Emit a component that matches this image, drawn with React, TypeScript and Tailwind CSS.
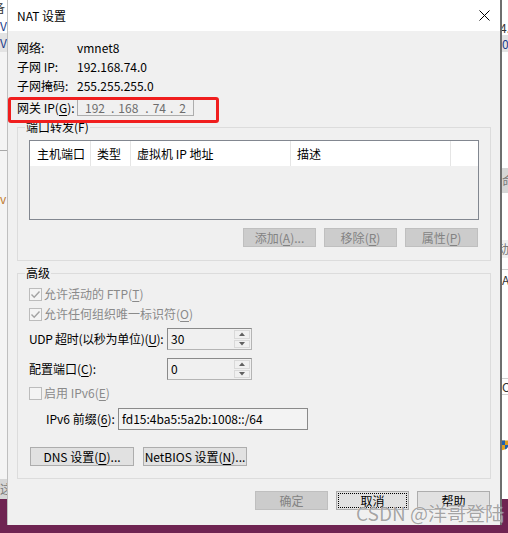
import React from 'react'

const purple = 'bg-[#6f2452]'

const Key = ({ k }: { k: string }) => (
  <span>
    (<u className="underline-offset-2">{k}</u>)
  </span>
)

type BtnProps = {
  children: React.ReactNode
  className?: string
  disabled?: boolean
  focus?: boolean
}

const Button = ({ children, className, disabled, focus }: BtnProps) => (
  <div
    className={
      'relative flex h-[19px] items-center justify-center whitespace-nowrap border leading-none ' +
      (disabled
        ? 'border-[#bfbfbf] bg-[#cccccc] text-[#838383] '
        : 'border-[#adadad] bg-[#e1e1e1] text-black ') +
      (className ?? '')
    }
  >
    {focus && <div className="absolute inset-[1px] border border-dotted border-black" />}
    {children}
  </div>
)

const Group = ({ label, children }: { label: string; children: React.ReactNode }) => (
  <div className="relative border border-[#dcdcdc]">
    <span className="absolute -top-[9px] left-[7px] bg-[#f0f0f0] px-[1px] leading-[16px]">{label}</span>
    {children}
  </div>
)

const Check = ({ checked }: { checked?: boolean }) => (
  <div className="flex h-[13px] w-[13px] shrink-0 items-center justify-center border border-[#bcbcbc] bg-[#f4f4f4]">
    {checked && (
      <svg width="11" height="11" viewBox="0 0 11 11">
        <path d="M1.5 5.5 L4.2 8.2 L9.5 2.5" fill="none" stroke="#a3a3a3" strokeWidth="1.4" />
      </svg>
    )}
  </div>
)

const Spin = ({ value }: { value: string }) => (
  <div className="flex h-[22px] w-[85px] shrink-0 border border-[#8a8a8a] border-r-[#b4b4b4] border-b-[#b4b4b4] bg-[#f0f0f0]">
    <span className="flex-1 pl-[3px] leading-[20px]">{value}</span>
    <div className="flex w-[17px] flex-col gap-[1px] py-[1px] pr-[1px]">
      <div className="flex flex-1 items-center justify-center border border-[#d9d9d9]">
        <svg width="6" height="4" viewBox="0 0 6 4">
          <polygon points="0,4 3,0.5 6,4" fill="#606060" />
        </svg>
      </div>
      <div className="flex flex-1 items-center justify-center border border-[#d9d9d9]">
        <svg width="6" height="4" viewBox="0 0 6 4">
          <polygon points="0,0 6,0 3,3.5" fill="#606060" />
        </svg>
      </div>
    </div>
  </div>
)

const InfoRow = ({ label, value }: { label: string; value: string }) => (
  <div className="flex h-[19px] items-center">
    <span className="w-[60px]">{label}</span>
    <span>{value}</span>
  </div>
)

const LeftStrip = () => (
  <div className="flex w-[7px] shrink-0 flex-col overflow-hidden whitespace-nowrap text-[12px] leading-none">
    <div className="h-[20px] bg-white pt-[2px]">
      <span className="-ml-[7px] text-[#333]">备</span>
    </div>
    <div className="h-[13px] bg-white text-[#1a3a8a]">V</div>
    <div className="flex h-[19px] items-center bg-[#e3e3e3] text-[#1a3a8a]">V</div>
    <div className="h-[98px] bg-[#f4f4f4]" />
    <div className="h-[1px] bg-[#a8a8a8]" />
    <div className="h-[42px] bg-[#f4f4f4]" />
    <div className="h-[14px] bg-[#f4f4f4] text-[#c07a30]">v</div>
    <div className="h-[272px] bg-[#f4f4f4]" />
    <div className="flex h-[20px] items-center bg-[#d6d6d6] text-[#7a7a7a]">这</div>
    <div className={'flex-1 ' + purple} />
  </div>
)

const RightStrip = () => (
  <div className="flex w-[6px] shrink-0 flex-col overflow-hidden whitespace-nowrap text-[12px] leading-none">
    <div className="h-[35px] bg-white pt-[22px] text-[#333]">
      <span className="-ml-[2px]">4.</span>
    </div>
    <div className="flex h-[17px] items-center bg-[#e3e3e3] text-[#1a3a8a]">0</div>
    <div className="h-[116px] bg-white" />
    <div className="flex h-[25px] items-center bg-[#d6d6d6] text-[#777]">命</div>
    <div className="h-[47px] bg-white" />
    <div className="flex h-[18px] items-center bg-[#f0f0f0] text-[#777]">
      <span className="-ml-[5px]">动</span>
    </div>
    <div className="h-[12px] border-b border-[#cfcfcf] bg-white" />
    <div className="flex h-[20px] items-center bg-white text-[#333]">AT</div>
    <div className="h-[88px] bg-white" />
    <div className="flex h-[17px] items-center border-y border-[#cfcfcf] bg-white text-[#333]">CR</div>
    <div className="h-[35px] bg-white" />
    <div className="flex h-[30px] items-center bg-white">
      <svg width="8" height="14" viewBox="0 0 8 14">
        <path d="M0 1 L8 1 L8 8 Q8 12 0 14 Z" fill="#e0a020" />
        <path d="M0 1 L4 1 L4 7 L0 7 Z" fill="#2060b0" />
        <path d="M4 7 L8 7 L8 9 Q7 12 4 13 Z" fill="#2060b0" />
      </svg>
    </div>
    <div className="h-[39px] bg-white" />
    <div className={'flex-1 ' + purple} />
  </div>
)

export default function App() {
  return (
    <div className="relative flex h-[533px] w-[508px] overflow-hidden bg-white font-['Noto_Sans_CJK_SC',sans-serif] text-[12px] text-black">
      <LeftStrip />
      <div className="flex w-[495px] shrink-0 flex-col">
        <div className="flex h-[525px] flex-col border-l border-r-2 border-l-[#bfbfbf] border-r-[#6e6e6e] bg-[#f0f0f0]">
          {/* title bar */}
          <div className="flex h-[31px] items-center justify-between bg-white pl-[9px] pr-[10px]">
            <span>NAT 设置</span>
            <svg width="11" height="11" viewBox="0 0 11 11">
              <path d="M0.5 0.5 L10.5 10.5 M10.5 0.5 L0.5 10.5" stroke="#000" strokeWidth="1" />
            </svg>
          </div>

          <div className="flex flex-col px-[9px]">
            <div className="mt-[7px]">
              <InfoRow label="网络:" value="vmnet8" />
              <InfoRow label="子网 IP:" value="192.168.74.0" />
              <InfoRow label="子网掩码:" value="255.255.255.0" />
            </div>

            <div className="mt-[4px] flex h-[17px] items-center">
              <span className="w-[60px] whitespace-nowrap">
                网关 IP<Key k="G" />:
              </span>
              <div className="flex h-[17px] w-[117px] items-center border border-[#adadad] pl-[7px] text-[#6d6d6d]">
                <span>192</span>
                <span className="ml-[6px]">.</span>
                <span className="ml-[4px]">168</span>
                <span className="ml-[7px]">.</span>
                <span className="ml-[4px]">74</span>
                <span className="ml-[4px]">.</span>
                <span className="ml-[6px]">2</span>
              </div>
            </div>

            {/* port forwarding */}
            <div className="mt-[11px]">
              <Group label="端口转发(F)">
                <div className="flex flex-col px-[11px] pb-[13px] pt-[12px]">
                  <div className="flex h-[80px] flex-col border border-[#828790] bg-[#f0f0f0]">
                    <div className="flex h-[25px] bg-white">
                      <div className="flex w-[61px] items-center border-r border-[#e5e5e5] pl-[7px]">主机端口</div>
                      <div className="flex w-[40px] items-center border-r border-[#e5e5e5] pl-[6px]">类型</div>
                      <div className="flex w-[160px] items-center border-r border-[#e5e5e5] pl-[6px]">虚拟机 IP 地址</div>
                      <div className="flex w-[160px] items-center border-r border-[#e5e5e5] pl-[6px]">描述</div>
                      <div className="flex-1" />
                    </div>
                  </div>
                  <div className="mt-[8px] flex justify-end gap-[8px] pr-[1px]">
                    <Button disabled className="w-[73px]">
                      添加<Key k="A" />...
                    </Button>
                    <Button disabled className="w-[73px]">
                      移除<Key k="R" />
                    </Button>
                    <Button disabled className="w-[73px]">
                      属性<Key k="P" />
                    </Button>
                  </div>
                </div>
              </Group>
            </div>

            {/* advanced */}
            <div className="mt-[12px]">
              <Group label="高级">
                <div className="flex flex-col pb-[12px] pl-[11px] pt-[10px]">
                  <div className="flex h-[20px] items-center gap-[2px] text-[#8a8a8a]">
                    <Check checked />
                    <span>
                      允许活动的 FTP<Key k="T" />
                    </span>
                  </div>
                  <div className="flex h-[20px] items-center gap-[2px] text-[#8a8a8a]">
                    <Check checked />
                    <span>
                      允许任何组织唯一标识符<Key k="O" />
                    </span>
                  </div>
                  <div className="mt-[4px] flex h-[22px] items-center">
                    <span className="w-[138px] shrink-0 whitespace-nowrap tracking-[-0.3px]">
                      UDP 超时(以秒为单位)<Key k="U" />:
                    </span>
                    <Spin value="30" />
                  </div>
                  <div className="mt-[8px] flex h-[22px] items-center">
                    <span className="w-[138px] shrink-0 whitespace-nowrap">
                      配置端口<Key k="C" />:
                    </span>
                    <Spin value="0" />
                  </div>
                  <div className="mt-[3px] flex h-[20px] items-center gap-[2px] text-[#8a8a8a]">
                    <Check />
                    <span>
                      启用 IPv6<Key k="E" />
                    </span>
                  </div>
                  <div className="mt-[5px] flex h-[22px] items-center pl-[17px]">
                    <span className="w-[72px] shrink-0 whitespace-nowrap">
                      IPv6 前缀<Key k="6" />:
                    </span>
                    <div className="flex h-[22px] w-[190px] items-center border border-[#8a8a8a] bg-[#f3f3f3] pl-[3px]">
                      fd15:4ba5:5a2b:1008::/64
                    </div>
                  </div>
                  <div className="mt-[17px] flex gap-[9px] pl-[1px]">
                    <Button className="w-[104px]">
                      DNS 设置<Key k="D" />...
                    </Button>
                    <Button className="w-[104px]">
                      NetBIOS 设置<Key k="N" />...
                    </Button>
                  </div>
                </div>
              </Group>
            </div>

            {/* dialog buttons */}
            <div className="mt-[12px] flex justify-end gap-[8px] pr-[1px]">
              <Button disabled className="w-[73px]">
                确定
              </Button>
              <Button focus className="w-[73px]">
                取消
              </Button>
              <Button className="w-[73px]">帮助</Button>
            </div>
          </div>
        </div>
        <div className={'flex-1 ' + purple} />
      </div>
      <RightStrip />

      {/* annotation + watermark overlays */}
      <div className="absolute left-[8px] top-[97px] h-[26px] w-[211px] rounded-[3px] border-[3px] border-[#f01e1e]" />
      <div className="absolute left-[356px] top-[501px] whitespace-nowrap text-[19px] leading-[24px] text-[rgba(125,125,125,0.7)] [text-shadow:0_0_1px_#fff]">
        CSDN @洋哥登陆
      </div>
    </div>
  )
}
